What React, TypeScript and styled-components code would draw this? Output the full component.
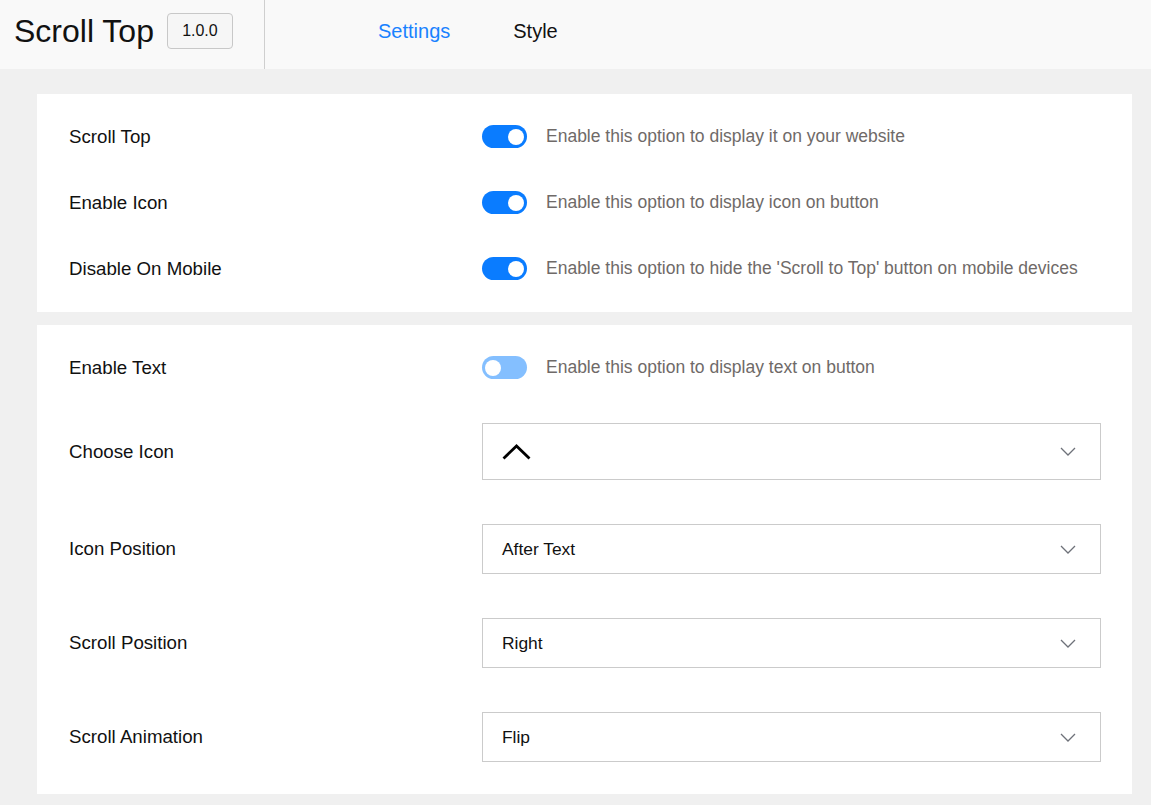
import React, { useState } from "react";
import styled, { createGlobalStyle } from "styled-components";

const GlobalStyle = createGlobalStyle`
  * {
    box-sizing: border-box;
  }
  body {
    margin: 0;
    background: #f0f0f0;
    font-family: "Liberation Sans", Arial, Helvetica, sans-serif;
    color: #111;
  }
`;

const Header = styled.header`
  height: 69px;
  display: flex;
  align-items: stretch;
  background: #f9f9f9;
`;

const Brand = styled.div`
  width: 265px;
  display: flex;
  align-items: center;
  padding: 0 0 7px 14px;
  border-right: 1px solid #cfcfcf;
`;

const BrandTitle = styled.h1`
  margin: 0;
  font-size: 32px;
  font-weight: 400;
  color: #111;
`;

const Version = styled.span`
  margin-left: 13px;
  width: 66px;
  height: 36px;
  display: flex;
  align-items: center;
  justify-content: center;
  font-size: 16px;
  color: #111;
  background: #f6f6f6;
  border: 1px solid #c8c8c8;
  border-radius: 4px;
`;

const Tabs = styled.nav`
  display: flex;
  align-items: center;
  gap: 63px;
  padding: 0 0 7px 113px;
`;

const Tab = styled.button<{ $active?: boolean }>`
  border: none;
  background: none;
  padding: 0;
  font-family: inherit;
  font-size: 20px;
  color: ${(p) => (p.$active ? "#1a82ff" : "#111")};
  cursor: pointer;
`;

const Main = styled.main`
  padding: 25px 19px 13px 37px;
  display: flex;
  flex-direction: column;
  gap: 13px;
`;

const Card = styled.section<{ $gap: number }>`
  background: #fff;
  padding: 31px 32px 32px;
  display: flex;
  flex-direction: column;
  gap: ${(p) => p.$gap}px;
`;

const Row = styled.div`
  display: flex;
  align-items: center;
`;

const Label = styled.div`
  width: 413px;
  flex-shrink: 0;
  font-size: 18.7px;
  color: #111;
`;

const Control = styled.div`
  flex: 1;
  display: flex;
  align-items: center;
`;

const Track = styled.button<{ $on: boolean }>`
  position: relative;
  width: 45px;
  height: 23px;
  padding: 0;
  border: none;
  border-radius: 12px;
  background: ${(p) => (p.$on ? "#0a7cff" : "#84bfff")};
  cursor: pointer;

  &::after {
    content: "";
    position: absolute;
    top: 3.5px;
    left: ${(p) => (p.$on ? "26px" : "3px")};
    width: 16px;
    height: 16px;
    border-radius: 50%;
    background: #fff;
  }
`;

const Help = styled.span`
  margin-left: 19px;
  font-size: 17.5px;
  color: #6f6a68;
`;

const Select = styled.div<{ $tall?: boolean }>`
  width: 619px;
  height: ${(p) => (p.$tall ? "57px" : "50px")};
  display: flex;
  align-items: center;
  justify-content: space-between;
  padding: 0 24px 0 19px;
  border: 1px solid #cbcbcb;
  background: #fff;
  font-size: 17.4px;
  color: #111;
  cursor: pointer;
`;

const Chevron = () => (
  <svg width="16" height="9" viewBox="0 0 16 9" fill="none">
    <path d="M1 1l7 7 7-7" stroke="#6e7179" strokeWidth="1.3" />
  </svg>
);

const UpArrow = () => (
  <svg width="29" height="16" viewBox="0 0 29 16" fill="none">
    <path d="M1.5 14.5L14.5 2l13 12.5" stroke="#000" strokeWidth="2.8" />
  </svg>
);

type ToggleRowProps = {
  label: string;
  help: string;
  on: boolean;
  onChange: () => void;
};

const ToggleRow = ({ label, help, on, onChange }: ToggleRowProps) => (
  <Row>
    <Label>{label}</Label>
    <Control>
      <Track type="button" $on={on} onClick={onChange} />
      <Help>{help}</Help>
    </Control>
  </Row>
);

const SelectRow = ({
  label,
  tall,
  children,
}: {
  label: string;
  tall?: boolean;
  children: React.ReactNode;
}) => (
  <Row>
    <Label>{label}</Label>
    <Control>
      <Select $tall={tall}>
        {children}
        <Chevron />
      </Select>
    </Control>
  </Row>
);

const App: React.FC = () => {
  const [tab, setTab] = useState("settings");
  const [opts, setOpts] = useState({
    scrollTop: true,
    icon: true,
    mobile: true,
    text: false,
  });

  const flip = (key: keyof typeof opts) =>
    setOpts((o) => ({ ...o, [key]: !o[key] }));

  return (
    <>
      <GlobalStyle />
      <Header>
        <Brand>
          <BrandTitle>Scroll Top</BrandTitle>
          <Version>1.0.0</Version>
        </Brand>
        <Tabs>
          <Tab $active={tab === "settings"} onClick={() => setTab("settings")}>
            Settings
          </Tab>
          <Tab $active={tab === "style"} onClick={() => setTab("style")}>
            Style
          </Tab>
        </Tabs>
      </Header>
      <Main>
        <Card $gap={43}>
          <ToggleRow
            label="Scroll Top"
            help="Enable this option to display it on your website"
            on={opts.scrollTop}
            onChange={() => flip("scrollTop")}
          />
          <ToggleRow
            label="Enable Icon"
            help="Enable this option to display icon on button"
            on={opts.icon}
            onChange={() => flip("icon")}
          />
          <ToggleRow
            label="Disable On Mobile"
            help="Enable this option to hide the 'Scroll to Top' button on mobile devices"
            on={opts.mobile}
            onChange={() => flip("mobile")}
          />
        </Card>
        <Card $gap={44}>
          <ToggleRow
            label="Enable Text"
            help="Enable this option to display text on button"
            on={opts.text}
            onChange={() => flip("text")}
          />
          <SelectRow label="Choose Icon" tall>
            <UpArrow />
          </SelectRow>
          <SelectRow label="Icon Position">After Text</SelectRow>
          <SelectRow label="Scroll Position">Right</SelectRow>
          <SelectRow label="Scroll Animation">Flip</SelectRow>
        </Card>
      </Main>
    </>
  );
};

export default App;
